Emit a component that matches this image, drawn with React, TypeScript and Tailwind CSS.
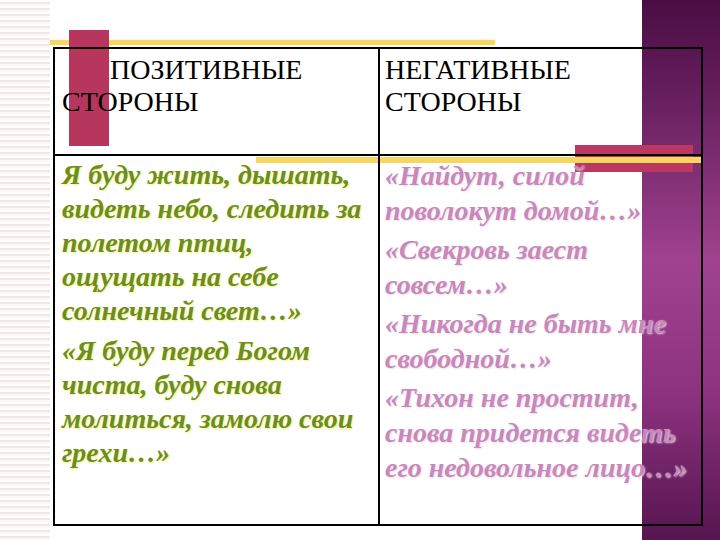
export default function App() {
  const green = "text-[#6b8e23] [text-shadow:1px_1px_2px_#f3ee86]";
  const pink = "text-[#c987bc] [text-shadow:1px_1px_2px_#e6dce4]";

  return (
    <div className="relative w-[720px] h-[540px] overflow-hidden bg-white font-['Liberation_Serif','Times_New_Roman',serif]">
      {/* background: striped left edge + purple right panel */}
      <div className="absolute inset-0 flex">
        <div className="w-[50px] h-full bg-[repeating-linear-gradient(to_bottom,#ffffff_0px,#ffffff_2px,#f1e7e9_2px,#f1e7e9_4px,#fbf8f8_4px,#fbf8f8_6px)]" />
        <div className="flex-1" />
        <div className="w-[78px] h-full bg-[linear-gradient(to_bottom,#4a0d43_0%,#6a2161_20%,#a0428f_48%,#8e3380_72%,#561550_100%)]" />
      </div>

      {/* decorative bars */}
      <div className="absolute left-[50px] top-[40px] w-[445px] h-[5px] bg-[#f6d764] shadow-[0_0_3px_#fbeeb6]" />
      <div className="absolute left-[69px] top-[30px] w-[40px] h-[116px] bg-[#b6365d]" />
      <div className="absolute left-[575px] top-[145px] w-[118px] h-[27px] bg-[#bb3863]" />
      <div className="absolute left-[256px] top-[157px] w-[446px] h-[6px] bg-[#f7d660]" />

      <div className="relative ml-[53px] pt-[47px]">
        <div className="w-[650px] h-[479px] border-2 border-black grid grid-cols-[325px_1fr] grid-rows-[107px_1fr]">
          <div className="border-r-2 border-b-2 border-black pl-[7px] pt-[5px] text-[28px] leading-[32px] text-black indent-[48px]">
            ПОЗИТИВНЫЕ
            <br />
            СТОРОНЫ
          </div>
          <div className="border-b-2 border-black pl-[5px] pt-[5px] text-[28px] leading-[32px] text-black">
            НЕГАТИВНЫЕ
            <br />
            СТОРОНЫ
          </div>

          <div className={`border-r-2 border-black pl-[7px] pt-[2px] text-[28px] leading-[34px] font-bold italic ${green}`}>
            <p>
              Я буду жить, дышать,
              <br />
              видеть небо, следить за
              <br />
              полетом птиц,
              <br />
              ощущать на себе
              <br />
              солнечный свет…»
            </p>
            <p className="mt-[6px]">
              «Я буду перед Богом
              <br />
              чиста, буду снова
              <br />
              молиться, замолю свои
              <br />
              грехи…»
            </p>
          </div>
          <div className={`pl-[5px] pt-[2px] text-[28px] leading-[35px] font-bold italic ${pink}`}>
            <p>
              «Найдут, силой
              <br />
              поволокут домой…»
            </p>
            <p className="mt-[4px]">
              «Свекровь заест
              <br />
              совсем…»
            </p>
            <p className="mt-[4px]">
              «Никогда не быть мне
              <br />
              свободной…»
            </p>
            <p className="mt-[4px]">
              «Тихон не простит,
              <br />
              снова придется видеть
              <br />
              его недовольное лицо…»
            </p>
          </div>
        </div>
      </div>
    </div>
  );
}
